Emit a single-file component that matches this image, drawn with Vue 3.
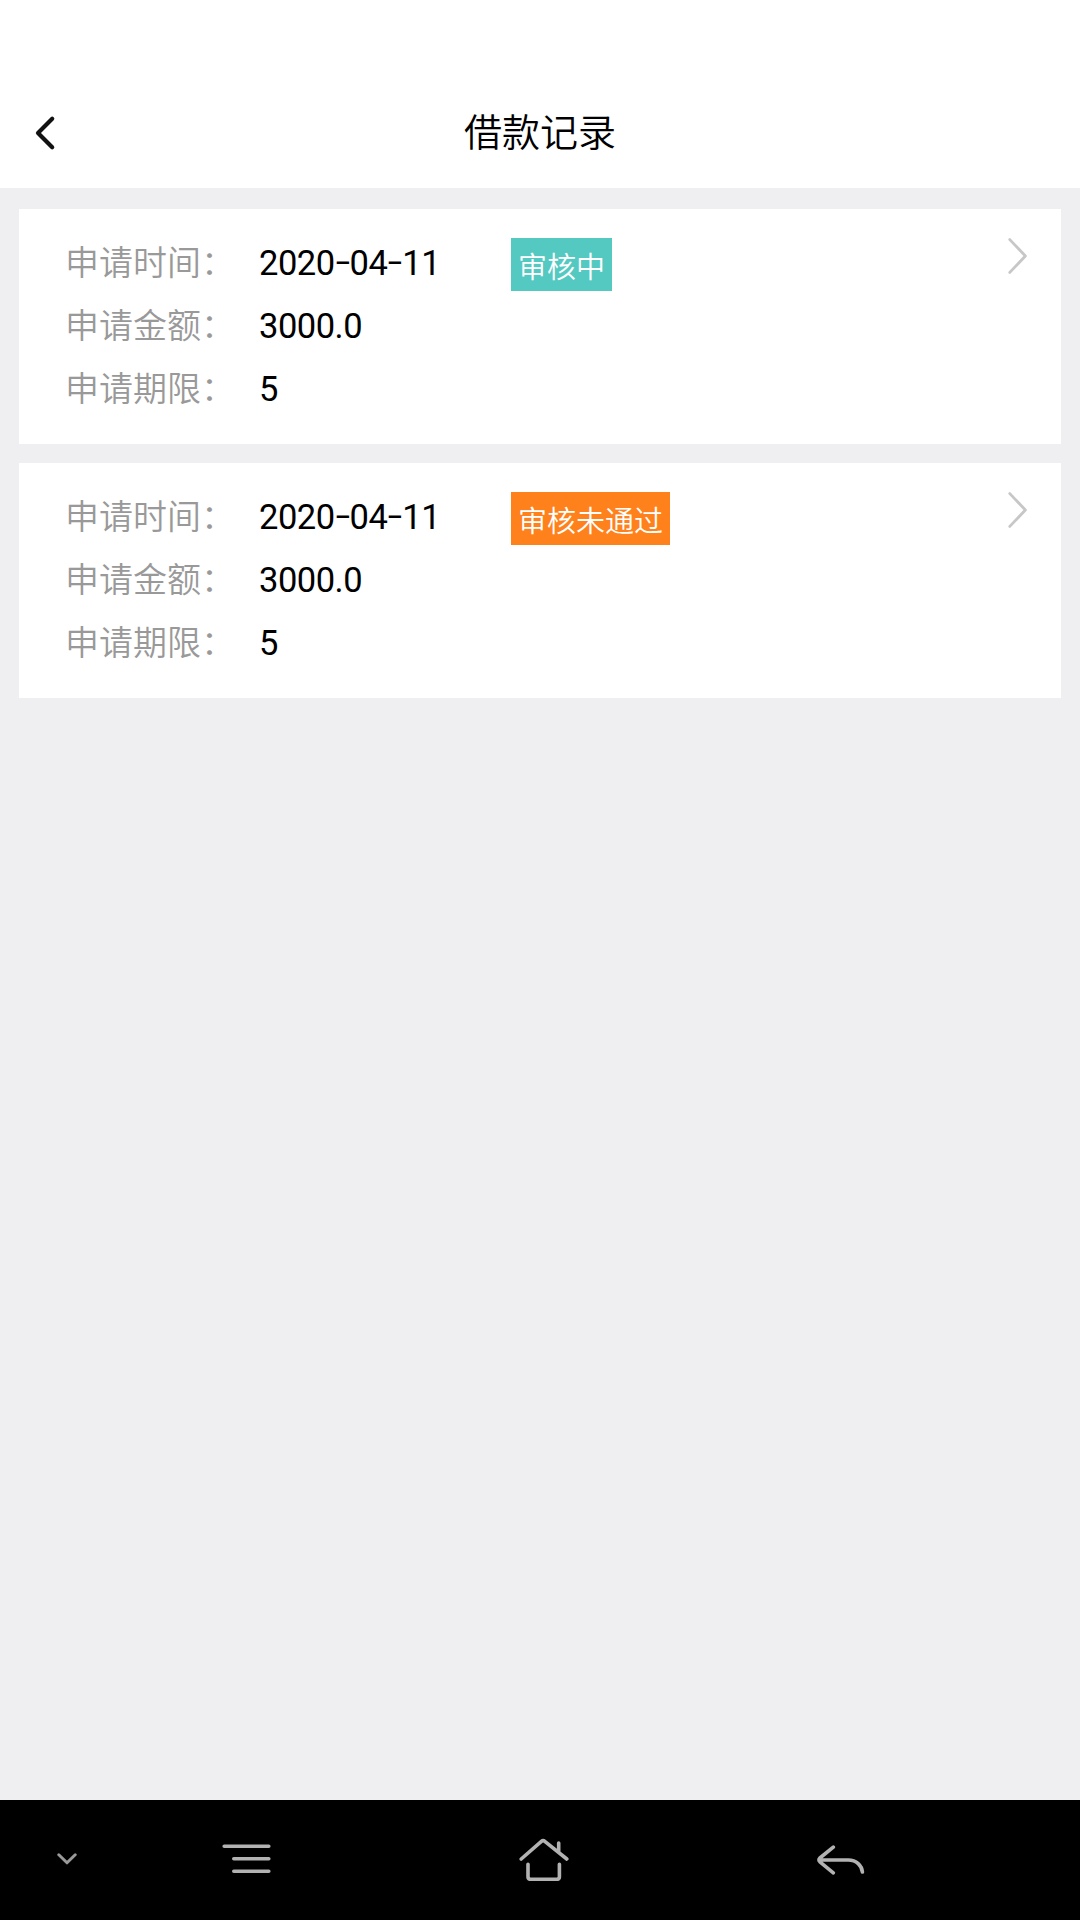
<template>
  <div class="page">
    <header class="header">
      <svg class="back" viewBox="0 0 24 36">
        <path d="M18.2 3.8 4 17.9l14.2 14.3" />
      </svg>
      <h1 class="title">借款记录</h1>
    </header>

    <main class="list">
      <section v-for="record in records" :key="record.id" class="card">
        <div class="fields">
          <div class="row">
            <span class="label">申请时间：</span>
            <span class="value date">
              <span v-for="(part, i) in splitDate(record.date)" :key="i" :class="{ dash: part === '-' }">{{ part }}</span>
            </span>
          </div>
          <div class="row">
            <span class="label">申请金额：</span>
            <span class="value">{{ record.amount }}</span>
          </div>
          <div class="row">
            <span class="label">申请期限：</span>
            <span class="value">{{ record.period }}</span>
          </div>
        </div>
        <span class="tag" :class="record.status">{{ statusText[record.status] }}</span>
        <svg class="arrow" viewBox="0 0 20 38">
          <path d="M1.8 2.6 17.4 19 1.8 35.4" />
        </svg>
      </section>
    </main>

    <nav class="navbar">
      <svg class="nav-down" viewBox="0 0 20 12">
        <path d="M1.8 1.8 10 9.8l8.2-8" />
      </svg>
      <svg class="nav-menu" viewBox="0 0 50 30">
        <path d="M2.2 2.2h44.6M11.8 14.7h35M11.8 27.2h35" />
      </svg>
      <svg class="nav-home" viewBox="0 0 50 44">
        <path d="M2.2 22 22.4 4.4q1.7-1.5 3.4 0L47.8 22M39.7 6v9.5M9 27.2v12.6q0 2.5 2.5 2.5h26.4q2.5 0 2.5-2.5V27.2" />
      </svg>
      <svg class="nav-back" viewBox="0 0 50 32">
        <path d="M17.3 3.2 3.9 14q-1.8 1.9 0 3.8l13.4 11M4 16h28.3c8.2 0 13.5 5.8 14.1 12" />
      </svg>
    </nav>
  </div>
</template>

<script setup>
import { ref } from 'vue'

const statusText = {
  pending: '审核中',
  rejected: '审核未通过'
}

const records = ref([
  { id: 1, date: '2020-04-11', amount: '3000.0', period: 5, status: 'pending' },
  { id: 2, date: '2020-04-11', amount: '3000.0', period: 5, status: 'rejected' }
])

// keeps the separators so they can be styled
const splitDate = (date) => date.split(/(-)/)
</script>

<style>
body {
  margin: 0;
  background: #efeff1;
}
</style>

<style scoped>
.page {
  display: flex;
  flex-direction: column;
  height: 1920px;
  background: #efeff1;
  font-family: "Noto Sans CJK SC", sans-serif;
}

.header {
  display: grid;
  grid-template-columns: 104px 1fr 104px;
  align-items: center;
  box-sizing: border-box;
  height: 188px;
  padding-top: 78px;
  background: #fff;
}

.back {
  width: 24px;
  height: 36px;
  margin: -1px 0 0 34px;
}

svg {
  fill: none;
  stroke-linecap: round;
  stroke-linejoin: round;
}

.back path {
  stroke: #111;
  stroke-width: 4.2;
}

.title {
  margin: -6px 0 0;
  font-size: 38px;
  font-weight: 350;
  line-height: 56px;
  text-align: center;
  color: #000;
}

.list {
  flex: 1;
  display: flex;
  flex-direction: column;
  gap: 19px;
  padding: 21px 19px;
}

.card {
  display: flex;
  align-items: flex-start;
  box-sizing: border-box;
  height: 235px;
  padding: 22px 33px 0 46px;
  background: #fff;
}

.fields {
  width: 446px;
}

.row {
  display: flex;
  height: 63px;
  line-height: 60px;
  font-size: 34px;
}

.label {
  width: 194px;
  font-weight: 350;
  color: #999;
}

.value {
  font-family: Roboto, sans-serif;
  font-size: 34.5px;
  line-height: 65px;
  letter-spacing: -0.5px;
  color: #000;
}

.date {
  display: flex;
}

.dash {
  width: 15px;
  text-align: center;
  transform: translateY(-2px) scaleX(1.5);
}

.tag {
  height: 53px;
  margin-top: 7px;
  padding: 0 7px;
  font-size: 29px;
  font-weight: 350;
  line-height: 54px;
  color: #fff;
}

.pending {
  background: #54c9c1;
}

.rejected {
  background: #ff811b;
}

.arrow {
  width: 20px;
  height: 38px;
  margin: 6px 0 0 auto;
}

.arrow path {
  stroke: #c7c7c7;
  stroke-width: 2.8;
}

.navbar {
  display: flex;
  align-items: center;
  height: 120px;
  background: #000;
}

.navbar path {
  stroke: #b2b2b2;
  stroke-width: 3.6;
}

.nav-down {
  width: 20px;
  height: 12px;
  margin: -2px 0 0 57px;
}

.navbar .nav-down path {
  stroke: #999;
  stroke-width: 3;
}

.nav-menu {
  width: 50px;
  height: 30px;
  margin: -2px 0 0 145px;
}

.nav-home {
  width: 50px;
  height: 44px;
  margin: -2px 0 0 247px;
}

.nav-back {
  width: 50px;
  height: 32px;
  margin-left: 247px;
}
</style>
